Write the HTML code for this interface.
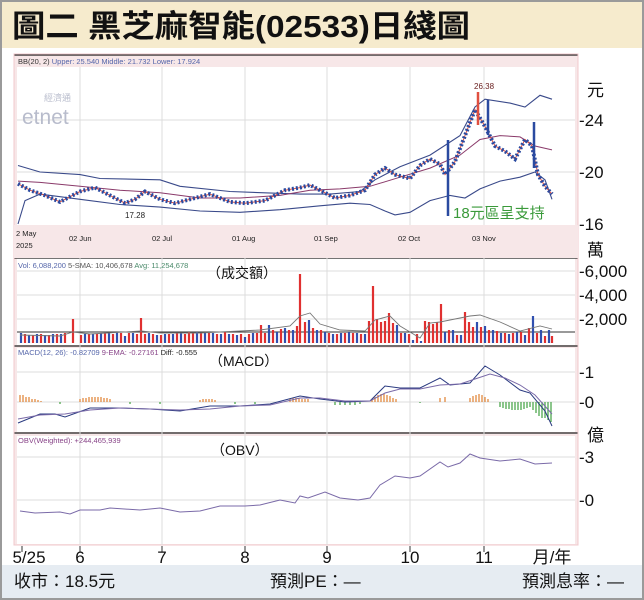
<!DOCTYPE html>
<html><head><meta charset="utf-8"><style>
html,body{margin:0;padding:0;background:#fff}
svg{display:block}
text{font-family:"Liberation Sans","Noto Sans CJK TC",sans-serif}
</style></head><body>
<svg width="644" height="600" viewBox="0 0 644 600" xmlns="http://www.w3.org/2000/svg">
<rect x="0" y="0" width="644" height="600" fill="#9a9a9a"/>
<rect x="2" y="2" width="640" height="596" fill="#fff"/>
<rect x="2" y="2" width="640" height="46" fill="#f6ebcd"/>
<text x="12" y="37" font-size="31" font-weight="bold" textLength="458" lengthAdjust="spacingAndGlyphs" font-family="'Noto Serif CJK SC','Noto Sans CJK TC',serif" fill="#111">圖二 黑芝麻智能(02533)日綫圖</text>
<rect x="2" y="565" width="640" height="33" fill="#e6ecf2"/>
<text x="14" y="587" font-size="17" fill="#111">收市：18.5元</text>
<text x="270" y="587" font-size="17" fill="#111">預測PE：—</text>
<text x="522" y="587" font-size="17" fill="#111">預測息率：—</text>

<rect x="14" y="54" width="564" height="491" fill="#f7e7e8"/>
<rect x="17" y="67" width="558" height="158" fill="#fff"/>
<rect x="17" y="258" width="558" height="87" fill="#fff"/>
<rect x="17" y="348" width="558" height="84" fill="#fff"/>
<rect x="17" y="436" width="558" height="108" fill="#fff"/>
<rect x="14" y="545" width="564" height="20" fill="#fff"/>
<line x1="14" y1="55" x2="578" y2="55" stroke="#222" stroke-width="1.2"/>
<line x1="14" y1="258" x2="578" y2="258" stroke="#222" stroke-width="1.2"/>
<line x1="14" y1="346" x2="578" y2="346" stroke="#222" stroke-width="1.2"/>
<line x1="14" y1="433" x2="578" y2="433" stroke="#222" stroke-width="1.2"/>
<rect x="14" y="54" width="564" height="491" fill="none" stroke="#f0c8cc" stroke-width="1"/>

<g stroke="#dcdcdc" stroke-width="1">
<line x1="80" y1="67" x2="80" y2="545"/><line x1="162" y1="67" x2="162" y2="545"/>
<line x1="245" y1="67" x2="245" y2="545"/><line x1="327" y1="67" x2="327" y2="545"/>
<line x1="410" y1="67" x2="410" y2="545"/><line x1="484" y1="67" x2="484" y2="545"/>
<line x1="17" y1="120" x2="575" y2="120"/><line x1="17" y1="172" x2="575" y2="172"/>
<line x1="17" y1="271" x2="575" y2="271"/><line x1="17" y1="295" x2="575" y2="295"/><line x1="17" y1="319" x2="575" y2="319"/>
<line x1="17" y1="372" x2="575" y2="372"/><line x1="17" y1="402" x2="575" y2="402"/>
<line x1="17" y1="457" x2="575" y2="457"/><line x1="17" y1="500" x2="575" y2="500"/>
</g>
<rect x="14" y="225" width="564" height="33" fill="#f7e7e8"/>

<text x="18" y="64" font-size="7.5" fill="#333">BB(20, 2) <tspan fill="#5566aa">Upper: 25.540 Middle: 21.732 Lower: 17.924</tspan></text>
<text x="44" y="101" font-size="9" fill="#b8bccc">經濟通</text>
<text x="22" y="124" font-size="21" fill="#b8bccc">etnet</text>

<g fill="none" stroke="#3a4a8a" stroke-width="1.1">
<polyline points="18,165.5 40,172 80,174.6 100,178.5 160,179.8 180,186.3 230,191.5 300,194.1 330,194.1 360,191.5 375,179.8 400,166.8 430,155.1 460,135.6 475,107 485,99.2 510,103.1 525,107 540,95.3 552,99.2"/>
<polyline points="18,224 25,200.6 40,194.1 80,199.3 120,204.5 160,207.1 200,211 240,212.3 280,209.7 320,205.8 350,203.2 370,204.5 385,211 395,214.9 410,212.3 430,200.6 450,195.4 465,198 480,188.9 500,181.1 520,177.2 535,172 545,179.8 552,199.3"/>
</g>
<polyline fill="none" stroke="#8a3a6a" stroke-width="1" points="18,181.1 40,182.4 80,186.3 120,190.2 160,192.8 200,198 240,198 280,195.4 310,190.2 340,188.9 370,186.3 400,177.2 430,168.1 460,155.1 480,139.5 500,135.6 520,136.9 535,146 552,149.9"/>
<polyline fill="none" stroke="#e05040" stroke-width="1" points="18,183.7 30,190.2 45,195.4 60,201.9 80,191.5 95,187.6 110,195.4 125,203.2 135,199.3 145,191.5 160,199.3 175,203.2 190,199.3 210,194.1 230,201.9 245,203.2 265,200.6 285,190.2 300,187.6 310,185 320,190.2 335,198 350,195.4 365,190.2 375,174.6 385,168.1 395,174.6 410,178.5 420,165.5 430,159 440,164.2 445,174.6 455,161.6 465,135.6 475,109.6 485,126.5 495,146 505,151.2 515,159 525,139.5 532,146 538,174.6 545,186.3 552,194.1"/>
<polyline fill="none" stroke="#2a4aa0" stroke-width="4" stroke-dasharray="2 2" points="18,183.7 30,190.2 45,195.4 60,201.9 80,191.5 95,187.6 110,195.4 125,203.2 135,199.3 145,191.5 160,199.3 175,203.2 190,199.3 210,194.1 230,201.9 245,203.2 265,200.6 285,190.2 300,187.6 310,185 320,190.2 335,198 350,195.4 365,190.2 375,174.6 385,168.1 395,174.6 410,178.5 420,165.5 430,159 440,164.2 445,174.6 455,161.6 465,135.6 475,109.6 485,126.5 495,146 505,151.2 515,159 525,139.5 532,146 538,174.6 545,186.3 552,194.1"/>
<g stroke-width="2.5"><line x1="448" y1="140" x2="448" y2="216" stroke="#2a4aa0"/><line x1="488" y1="100" x2="488" y2="135" stroke="#2a4aa0"/><line x1="534" y1="122" x2="534" y2="168" stroke="#2a4aa0"/><line x1="478" y1="92" x2="478" y2="125" stroke="#e05040"/></g>
<text x="474" y="89" font-size="8" fill="#6a2020">26.38</text>
<text x="125" y="218" font-size="8" fill="#222">17.28</text>
<text x="453" y="218" font-size="15" fill="#3a9a3a">18元區呈支持</text>

<g font-size="7.5" fill="#222">
<text x="16" y="236">2 May</text><text x="16" y="248">2025</text>
<text x="69" y="241">02 Jun</text><text x="152" y="241">02 Jul</text><text x="232" y="241">01 Aug</text>
<text x="314" y="241">01 Sep</text><text x="398" y="241">02 Oct</text><text x="472" y="241">03 Nov</text>
</g>

<text x="18" y="268" font-size="7.5" fill="#5566aa">Vol: 6,088,200 <tspan fill="#555">5-SMA: 10,406,678</tspan> <tspan fill="#4a8a6a">Avg: 11,254,678</tspan></text>
<text x="207" y="278" font-size="14" fill="#111">（成交額）</text>
<line x1="17" y1="332" x2="575" y2="332" stroke="#333" stroke-width="1"/>
<path stroke="#3050b0" stroke-width="2.2" d="M21 343V333M29 343V335M37 343V334M45 343V335M53 343V334M61 343V334M85 343V334M93 343V334M101 343V333M109 343V333M117 343V332M125 343V336M133 343V333M149 343V333M157 343V335M165 343V334M173 343V334M181 343V333M197 343V332M205 343V333M213 343V333M221 343V334M229 343V334M237 343V335M245 343V337M253 343V333M269 343V325M277 343V332M285 343V328M293 343V330M309 343V320M317 343V330M325 343V332M333 343V334M341 343V333M349 343V332M357 343V333M365 343V334M397 343V325M405 343V333M413 343V340M421 343V341M445 343V332M453 343V330M461 343V335M477 343V322M485 343V326M493 343V330M501 343V333M509 343V334M517 343V332M525 343V335M533 343V316M541 343V330M549 343V330"/>
<path stroke="#e03030" stroke-width="2.2" d="M25 343V334M33 343V335M41 343V334M49 343V335M57 343V334M65 343V333M73 343V319M81 343V335M89 343V334M97 343V334M105 343V333M113 343V334M121 343V333M129 343V333M137 343V334M141 343V318M145 343V334M153 343V334M161 343V335M169 343V334M177 343V333M185 343V334M189 343V332M193 343V333M201 343V333M209 343V333M217 343V334M225 343V332M233 343V334M241 343V334M249 343V334M257 343V333M261 343V325M265 343V333M273 343V330M281 343V329M289 343V330M297 343V326M300 343V274M305 343V322M313 343V328M321 343V330M329 343V333M337 343V334M345 343V333M353 343V333M361 343V334M369 343V321M373 343V286M377 343V319M381 343V322M385 343V321M389 343V313M393 343V323M401 343V333M409 343V334M417 343V334M425 343V321M429 343V322M433 343V324M437 343V322M441 343V304M449 343V330M457 343V335M465 343V312M469 343V322M473 343V327M481 343V327M489 343V330M497 343V331M505 343V333M513 343V333M521 343V332M529 343V328M537 343V333M545 343V336M552 343V336"/>
<polyline fill="none" stroke="#777" stroke-width="0.9" points="20,335 60,336 73,332 90,334 141,331 160,333 200,333 260,330 290,326 300,316 310,313 320,324 340,330 365,331 375,320 390,316 400,326 420,338 430,323 440,322 450,320 470,316 480,315 500,322 520,331 540,326 552,329"/>

<text x="18" y="355" font-size="7.5" fill="#5566aa">MACD(12, 26): -0.82709 <tspan fill="#884488">9-EMA: -0.27161</tspan> <tspan fill="#222">Diff: -0.555</tspan></text>
<text x="209" y="366" font-size="14" fill="#111">（MACD）</text>
<path stroke="#e08030" stroke-width="1.2" d="M20 402V395M23 402V395M26 402V397M29 402V397M32 402V399M35 402V399M38 402V400M41 402V401M80 402V399M83 402V398M86 402V398M89 402V397M92 402V397M95 402V397M98 402V397M101 402V397M104 402V398M107 402V398M110 402V399M200 402V400M203 402V399M206 402V399M209 402V399M212 402V399M215 402V400M290 402V399M293 402V398M296 402V398M299 402V398M302 402V399M305 402V399M308 402V399M372 402V399M375 402V397M378 402V395M381 402V394M384 402V394M387 402V395M390 402V396M393 402V398M396 402V399M440 402V398M445 402V397M470 402V398M473 402V396M476 402V395M479 402V394M482 402V395M485 402V397M488 402V399"/>
<path stroke="#40a040" stroke-width="1.2" d="M60 402V404M130 402V404M160 402V404M235 402V404M255 402V404M335 402V405M340 402V405M345 402V405M350 402V405M355 402V405M360 402V404M420 402V403M500 402V407M503 402V408M506 402V409M509 402V409M512 402V410M515 402V410M518 402V410M521 402V410M524 402V409M527 402V408M530 402V407M533 402V410M536 402V413M539 402V416M542 402V418M545 402V418M548 402V420M551 402V422"/>
<polyline fill="none" stroke="#2a3a80" stroke-width="1" points="18,423 40,414 55,414 65,417 90,408 120,408 150,409 180,411 210,406 240,406 270,404 300,396 320,399 345,402 370,401 385,386 400,388 420,388 440,378 450,385 470,383 485,366 500,375 520,390 530,393 545,411 552,426"/>
<polyline fill="none" stroke="#7a6aa8" stroke-width="1" points="18,419 40,415 65,414 90,410 120,408 150,409 180,410 210,409 240,406 270,405 300,398 320,398 345,401 370,401 385,393 400,389 420,389 440,385 460,384 475,379 490,374 505,378 520,385 535,395 552,414"/>

<text x="18" y="443" font-size="7.5" fill="#884488">OBV(Weighted): +244,465,939</text>
<text x="211" y="455" font-size="14" fill="#111">（OBV）</text>
<polyline fill="none" stroke="#7a6aa8" stroke-width="1" points="20,511 35,513 60,512 70,514 80,510 100,510 110,508 140,510 160,508 180,512 200,511 220,506 245,506 260,505 280,500 295,503 300,496 308,498 325,492 340,498 358,500 370,498 380,485 395,476 410,478 420,476 440,462 448,467 460,463 470,454 480,458 500,461 520,459 535,464 552,463"/>

<g stroke="#333" stroke-width="1"><line x1="22" y1="546" x2="22" y2="552"/><line x1="80" y1="546" x2="80" y2="552"/><line x1="162" y1="546" x2="162" y2="552"/><line x1="245" y1="546" x2="245" y2="552"/><line x1="327" y1="546" x2="327" y2="552"/><line x1="410" y1="546" x2="410" y2="552"/><line x1="484" y1="546" x2="484" y2="552"/></g>
<g font-size="17" fill="#111" text-anchor="middle">
<text x="29" y="563">5/25</text>
<text x="80" y="563">6</text><text x="162" y="563">7</text><text x="245" y="563">8</text>
<text x="327" y="563">9</text><text x="410" y="563">10</text><text x="484" y="563">11</text>
<text x="552" y="563">月/年</text>
</g>

<g font-size="17" fill="#111">
<text x="587" y="96">元</text>
<text x="579" y="126">-24</text><text x="579" y="178">-20</text><text x="579" y="230">-16</text>
<text x="587" y="256">萬</text>
<text x="579" y="277">-6,000</text><text x="579" y="301">-4,000</text><text x="579" y="325">-2,000</text>
<text x="579" y="378">-1</text><text x="579" y="408">-0</text>
<text x="587" y="441">億</text>
<text x="579" y="463">-3</text><text x="579" y="506">-0</text>
</g>
</svg>
</body></html>
